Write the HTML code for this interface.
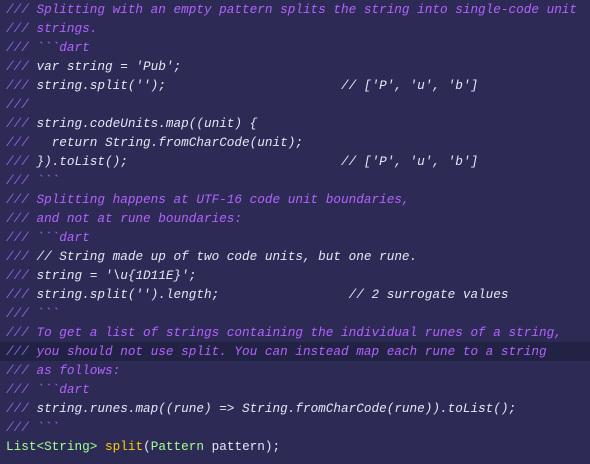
<!DOCTYPE html>
<html><head><meta charset="utf-8"><style>
html,body{margin:0;padding:0;width:590px;height:464px;overflow:hidden;background:#2d2b55;}
.c{font-family:"Liberation Mono",monospace;font-size:12.7px;line-height:19px;font-style:italic;}
.l{height:19px;padding-left:6px;color:#b362ff;white-space:pre;}
.h{background:#222244;}
.s{color:#8a63e0;}
.w{color:#e6e6f5;}
.n{font-style:normal;}
.g{color:#a5ff90;}
.y{color:#fad000;}
</style></head><body><div class="c"><div class="l"><span class="s">///</span> Splitting with an empty pattern splits the string into single-code unit</div><div class="l"><span class="s">///</span> strings.</div><div class="l"><span class="s">///</span> &#96;&#96;&#96;dart</div><div class="l"><span class="s">///</span> <span class="w">var string = 'Pub';</span></div><div class="l"><span class="s">///</span> <span class="w">string.split('');                       // ['P', 'u', 'b']</span></div><div class="l"><span class="s">///</span></div><div class="l"><span class="s">///</span> <span class="w">string.codeUnits.map((unit) {</span></div><div class="l"><span class="s">///</span> <span class="w">  return String.fromCharCode(unit);</span></div><div class="l"><span class="s">///</span> <span class="w">}).toList();                            // ['P', 'u', 'b']</span></div><div class="l"><span class="s">///</span> &#96;&#96;&#96;</div><div class="l"><span class="s">///</span> Splitting happens at UTF-16 code unit boundaries,</div><div class="l"><span class="s">///</span> and not at rune boundaries:</div><div class="l"><span class="s">///</span> &#96;&#96;&#96;dart</div><div class="l"><span class="s">///</span> <span class="w">// String made up of two code units, but one rune.</span></div><div class="l"><span class="s">///</span> <span class="w">string = '\u{1D11E}';</span></div><div class="l"><span class="s">///</span> <span class="w">string.split('').length;                 // 2 surrogate values</span></div><div class="l"><span class="s">///</span> &#96;&#96;&#96;</div><div class="l"><span class="s">///</span> To get a list of strings containing the individual runes of a string,</div><div class="l h"><span class="s">///</span> you should not use split. You can instead map each rune to a string</div><div class="l"><span class="s">///</span> as follows:</div><div class="l"><span class="s">///</span> &#96;&#96;&#96;dart</div><div class="l"><span class="s">///</span> <span class="w">string.runes.map((rune) =&gt; String.fromCharCode(rune)).toList();</span></div><div class="l"><span class="s">///</span> &#96;&#96;&#96;</div><div class="l n"><span class="g">List&lt;String&gt;</span> <span class="y">split</span><span class="w">(</span><span class="g">Pattern</span><span class="w"> pattern);</span></div></div></body></html>
